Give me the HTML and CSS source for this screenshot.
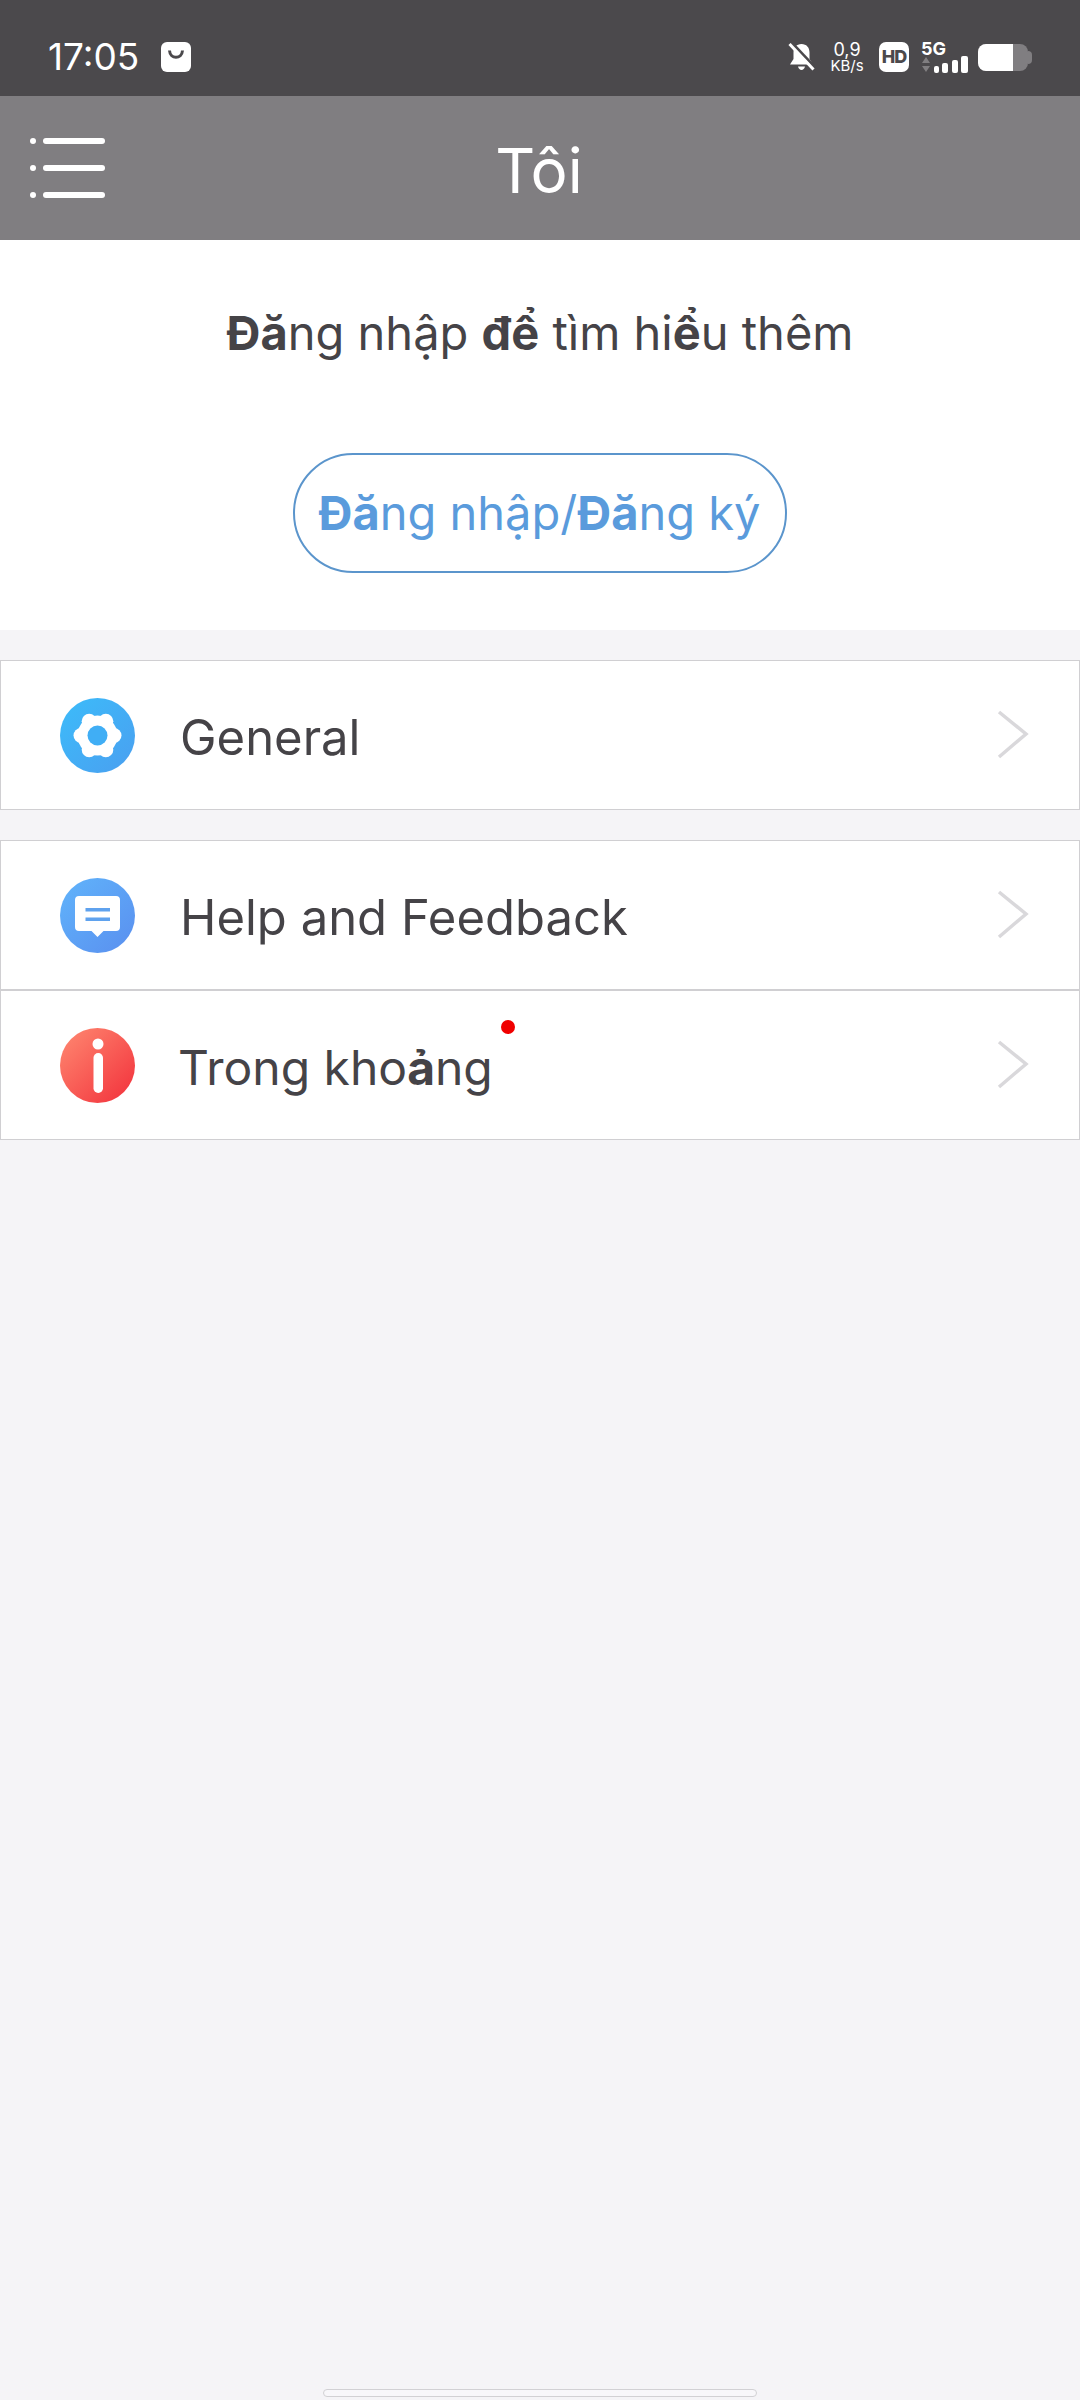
FILE: index.html
```html
<!DOCTYPE html>
<html>

<head>
  <meta charset="utf-8">
  <link rel="stylesheet" href="styles.css">
</head>

<body>
  <div class="status-bar">
    <div class="status-left">
      <span class="status-time">17:05</span>
      <svg class="status-bag" width="30" height="30" viewBox="0 0 30 30">
        <rect width="30" height="30" rx="6" fill="#fff"/>
        <path d="M8.500 8.500c.6 9 12.400 9 13 0" fill="none" stroke="#4b494c" stroke-width="3"/>
      </svg>
    </div>
    <div class="status-right">
      <svg class="status-bell" width="27" height="28" viewBox="0 0 27 28">
        <path d="M13.500 1c5 0 8 3.500 8 8.500v6.500l3.500 5.500H2l3.500-5.500V9.500c0-5 3-8.500 8-8.500z" fill="#fff"/>
        <path d="M10 23.500h7c-.5 2-2 3.500-3.500 3.500S10.500 25.500 10 23.500z" fill="#fff"/>
        <path d="M4 0l23 24.500" stroke="#4b494c" stroke-width="3"/>
        <path d="M1.500 1l24 25.500" stroke="#fff" stroke-width="3"/>
      </svg>
      <div class="net-speed">
        <span class="net-value">0,9</span>
        <span class="net-unit">KB/s</span>
      </div>
      <div class="hd-badge">HD</div>
      <div class="signal">
        <span class="signal-label">5G</span>
        <svg width="47" height="17" viewBox="0 0 47 17">
          <path d="M5 1l4 6H1zM5 16l4-6H1z" fill="#807e81"/>
          <rect x="13" y="10" width="5" height="7" rx="2" fill="#fff"/>
          <rect x="21" y="7" width="6" height="10" rx="2" fill="#fff"/>
          <rect x="31" y="4" width="6" height="13" rx="2" fill="#fff"/>
          <rect x="40" y="0" width="7" height="17" rx="2" fill="#fff"/>
        </svg>
      </div>
      <div class="battery">
        <div class="battery-fill"></div>
      </div>
    </div>
  </div>

  <div class="title-bar">
    <svg class="menu-icon" width="75" height="60" viewBox="0 0 75 60">
      <circle cx="3" cy="3" r="3" fill="#fff"/>
      <circle cx="3" cy="30" r="3" fill="#fff"/>
      <circle cx="3" cy="57" r="3" fill="#fff"/>
      <rect x="13" y="0" width="62" height="6" rx="3" fill="#fff"/>
      <rect x="13" y="27" width="62" height="6" rx="3" fill="#fff"/>
      <rect x="13" y="54" width="62" height="6" rx="3" fill="#fff"/>
    </svg>
    <div class="title">Tôi</div>
  </div>

  <div class="login">
    <p class="login-text"><b>Đă</b>ng nhập <b>để</b> tìm hi<b>ể</b>u thêm</p>
    <div class="login-button"><b>Đă</b>ng nhập/<b>Đă</b>ng ký</div>
  </div>

  <div class="group">
    <div class="row">
      <svg class="row-icon" width="75" height="75" viewBox="0 0 75 75">
        <defs>
          <linearGradient id="grad-general" x1="0" y1="0" x2="1" y2="1">
            <stop offset="0" stop-color="#3cbcfa"/>
            <stop offset="1" stop-color="#4a9ff0"/>
          </linearGradient>
        </defs>
        <circle cx="37.500" cy="37.500" r="37.500" fill="url(#grad-general)"/>
        <g fill="#fff">
          <circle cx="37.500" cy="37.500" r="20"/>
          <circle cx="54" cy="37.500" r="7.500"/>
          <circle cx="21" cy="37.500" r="7.500"/>
          <circle cx="45.800" cy="23.200" r="7.500"/>
          <circle cx="29.200" cy="23.200" r="7.500"/>
          <circle cx="45.800" cy="51.800" r="7.500"/>
          <circle cx="29.200" cy="51.800" r="7.500"/>
        </g>
        <circle cx="37.500" cy="37.500" r="10" fill="#40aef5"/>
      </svg>
      <span class="row-label">General</span>
      <svg class="row-arrow" width="32" height="50" viewBox="0 0 32 50">
        <path d="M2 2l27 22L2 47" fill="none" stroke="#d9d8db" stroke-width="3.500"/>
      </svg>
    </div>
  </div>

  <div class="group">
    <div class="row">
      <svg class="row-icon" width="75" height="75" viewBox="0 0 75 75">
        <defs>
          <linearGradient id="grad-help" x1="0" y1="0" x2="1" y2="1">
            <stop offset="0" stop-color="#60b4fb"/>
            <stop offset="1" stop-color="#5a8fef"/>
          </linearGradient>
        </defs>
        <circle cx="37.500" cy="37.500" r="37.500" fill="url(#grad-help)"/>
        <path d="M19 18h37a4 4 0 0 1 4 4v27a4 4 0 0 1-4 4H43.500l-6 6-6-6H19a4 4 0 0 1-4-4V22a4 4 0 0 1 4-4z" fill="#fff"/>
        <rect x="25.500" y="30" width="24.500" height="3.500" fill="#5fa2ee"/>
        <rect x="25.500" y="39.500" width="24.500" height="3.500" fill="#5fa2ee"/>
      </svg>
      <span class="row-label">Help and Feedback</span>
      <svg class="row-arrow" width="32" height="50" viewBox="0 0 32 50">
        <path d="M2 2l27 22L2 47" fill="none" stroke="#d9d8db" stroke-width="3.500"/>
      </svg>
    </div>
    <div class="row">
      <svg class="row-icon" width="75" height="75" viewBox="0 0 75 75">
        <defs>
          <linearGradient id="grad-about" x1="0" y1="0" x2="1" y2="1">
            <stop offset="0" stop-color="#ff8a72"/>
            <stop offset="1" stop-color="#f22f3a"/>
          </linearGradient>
        </defs>
        <circle cx="37.500" cy="37.500" r="37.500" fill="url(#grad-about)"/>
        <circle cx="38" cy="16" r="5.500" fill="#fff"/>
        <rect x="33.500" y="25" width="9.500" height="40" rx="4.700" fill="#fff"/>
      </svg>
      <span class="row-label row-label-about">Trong kho<b>ả</b>ng<span class="red-dot"></span></span>
      <svg class="row-arrow" width="32" height="50" viewBox="0 0 32 50">
        <path d="M2 2l27 22L2 47" fill="none" stroke="#d9d8db" stroke-width="3.500"/>
      </svg>
    </div>
  </div>

  <div class="home-indicator"></div>
</body>

</html>
```

FILE: styles.css
```css
* {
  box-sizing: border-box;
}
body {
  font-family: Inter, "Noto Sans", sans-serif;
  width: 1080px;
  height: 2400px;
  margin: 0;
  background-color: #f5f4f7;
  color: #454347;
  display: flex;
  flex-direction: column;
  overflow: hidden;
}

.status-bar {
  height: 96px;
  flex-shrink: 0;
  background-color: #4b494c;
  color: #fff;
  display: flex;
  flex-direction: row;
  justify-content: space-between;
  align-items: center;
  padding: 18px 48px 0;
}
.status-left {
  display: flex;
  align-items: center;
  gap: 22px;
}
.status-time {
  font-size: 37px;
  line-height: 40px;
}
.status-right {
  display: flex;
  align-items: center;
}
.net-speed {
  display: flex;
  flex-direction: column;
  align-items: center;
  width: 36px;
  margin-left: 14px;
}
.net-value {
  font-size: 18px;
  line-height: 17px;
}
.net-unit {
  font-size: 15px;
  line-height: 15px;
}
.hd-badge {
  width: 30px;
  height: 30px;
  margin-left: 14px;
  border-radius: 7px;
  background-color: #fff;
  color: #4b494c;
  font-size: 18px;
  font-weight: 800;
  line-height: 30px;
  text-align: center;
  letter-spacing: -1px;
}
.signal {
  display: flex;
  flex-direction: column;
  width: 47px;
  margin-left: 12px;
}
.signal-label {
  font-size: 18px;
  font-weight: 700;
  line-height: 14px;
}
.battery {
  position: relative;
  width: 50px;
  height: 27px;
  margin-left: 10px;
  margin-right: 4px;
  border-radius: 8px;
  background-color: #807e81;
}
.battery::after {
  content: "";
  position: absolute;
  left: 50px;
  top: 7px;
  width: 4px;
  height: 13px;
  border-radius: 0 4px 4px 0;
  background-color: #807e81;
}
.battery-fill {
  width: 35px;
  height: 100%;
  border-radius: 8px 0 0 8px;
  background-color: #fff;
}

.title-bar {
  height: 144px;
  flex-shrink: 0;
  background-color: #807e81;
  display: flex;
  align-items: center;
  position: relative;
}
.menu-icon {
  margin-left: 30px;
}
.title {
  position: absolute;
  left: 0;
  right: 0;
  top: 39px;
  padding-right: 2px;
  text-align: center;
  color: #fff;
  font-size: 62px;
  line-height: 72px;
}

.login {
  height: 390px;
  flex-shrink: 0;
  background-color: #fff;
  display: flex;
  flex-direction: column;
  align-items: center;
  padding-top: 63px;
}
.login-text {
  margin: 0;
  font-size: 47px;
  line-height: 60px;
}
.login-button {
  width: 494px;
  height: 120px;
  margin-top: 90px;
  margin-right: 1px;
  border: 2px solid #5b95cc;
  border-radius: 60px;
  color: #5a9bdc;
  font-size: 47px;
  line-height: 116px;
  text-align: center;
  white-space: nowrap;
}

.group {
  margin-top: 30px;
  background-color: #fff;
  border: 1px solid #d0cfd2;
}
.row {
  height: 148px;
  display: flex;
  align-items: center;
  padding: 0 50px 0 59px;
}
.row + .row {
  height: 150px;
  border-top: 2px solid #d0cfd2;
}
.row-icon {
  flex-shrink: 0;
}
.row-label {
  flex-grow: 1;
  margin-left: 45px;
  padding-top: 6px;
  font-size: 49px;
  line-height: 60px;
}
.row-label-about {
  position: relative;
  margin-left: 43px;
  font-size: 48px;
}
.red-dot {
  position: absolute;
  left: 323px;
  top: -12px;
  width: 14px;
  height: 14px;
  border-radius: 50%;
  background-color: #f00000;
}

.home-indicator {
  width: 434px;
  height: 8px;
  margin: auto auto 3px;
  background-color: #f8f7fa;
  border: 1px solid #d2d1d4;
  border-radius: 4px;
}
```
